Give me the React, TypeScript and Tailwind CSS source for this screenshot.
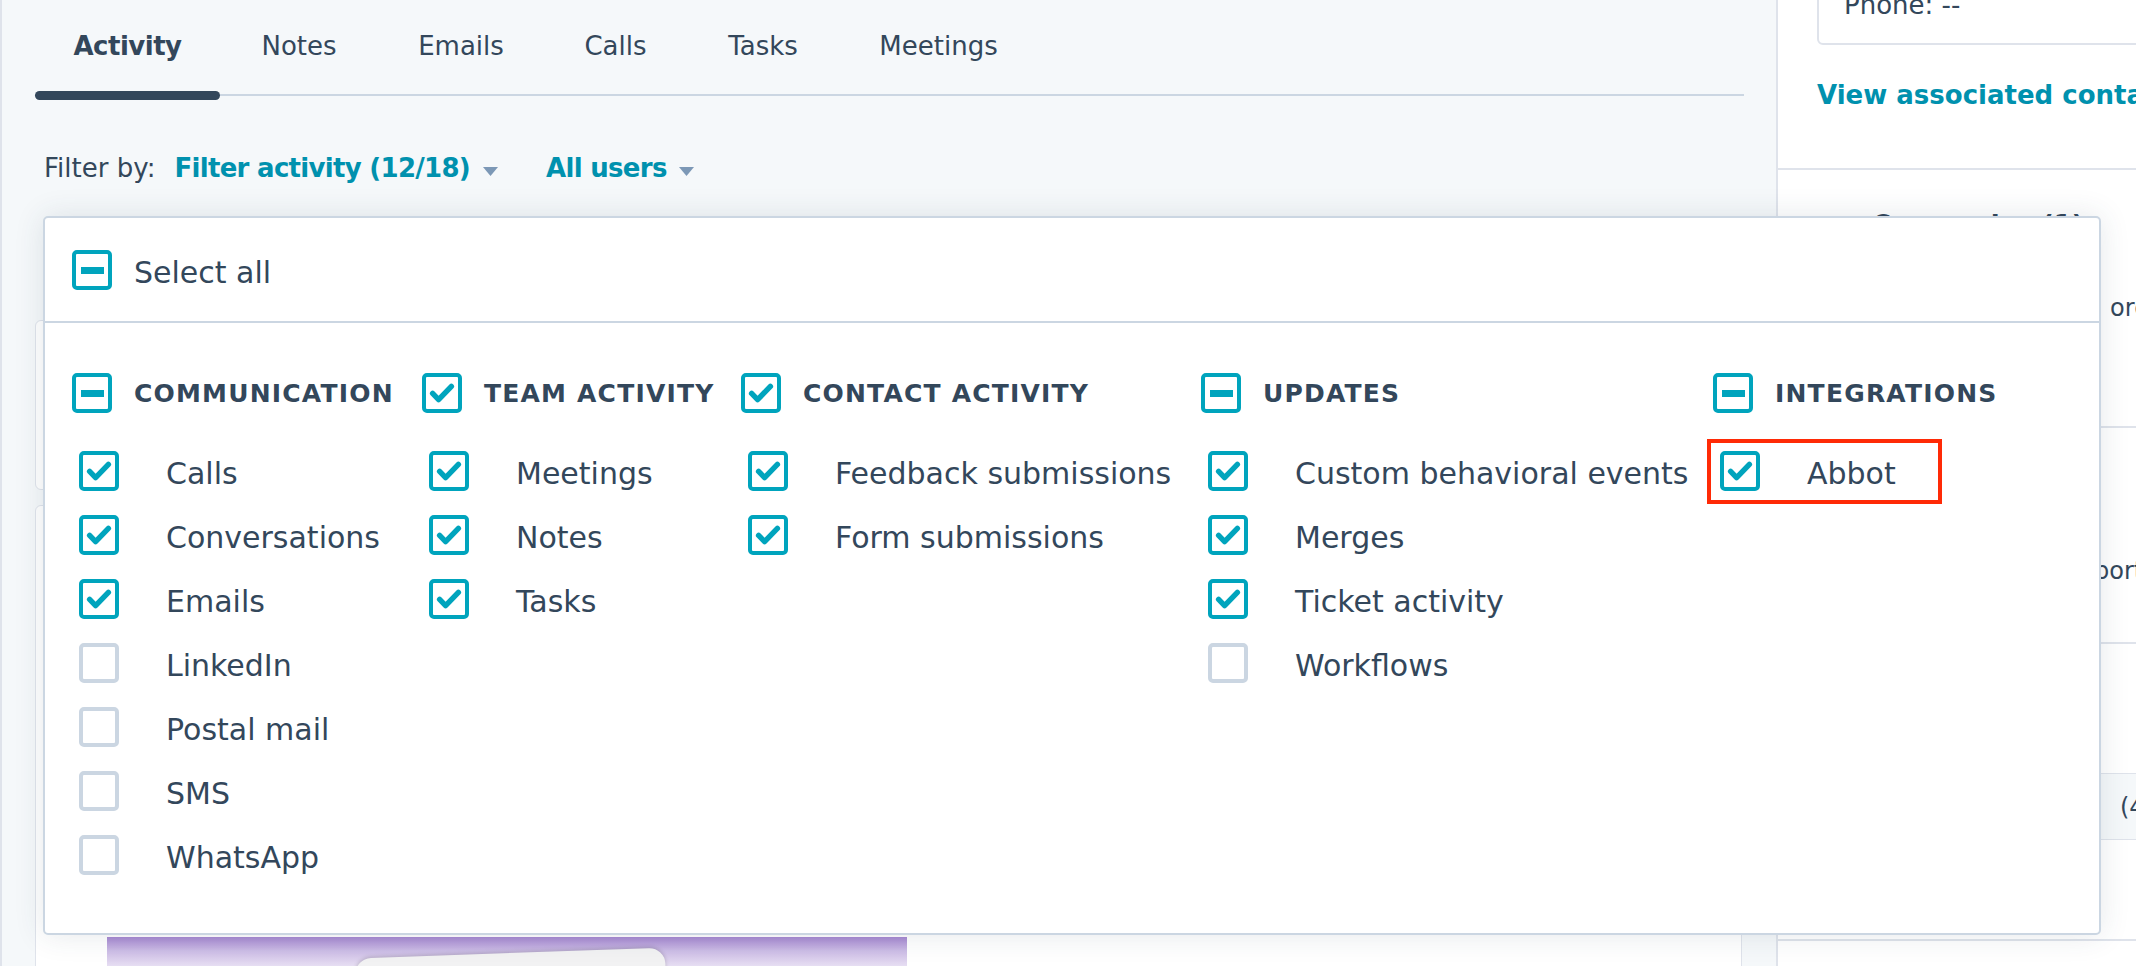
import React from "react";

type State = "on" | "off" | "mixed";

function Box({ state }: { state: State }) {
  if (state === "off") {
    return <span className="block h-[40px] w-[40px] shrink-0 rounded-[5px] border-4 border-[#cbd6e2] bg-white" />;
  }
  return (
    <span className="flex h-[40px] w-[40px] shrink-0 items-center justify-center rounded-[5px] border-4 border-[#00a4bd] bg-white">
      {state === "on" ? (
        <svg width="32" height="32" viewBox="0 0 32 32">
          <path
            d="M6.6 16.4 12.6 22.6 25.4 9.4"
            fill="none"
            stroke="#00a4bd"
            strokeWidth="5.4"
            strokeLinecap="round"
            strokeLinejoin="round"
          />
        </svg>
      ) : (
        <span className="block h-[7px] w-[23px] bg-[#00a4bd]" />
      )}
    </span>
  );
}

function Caret() {
  return (
    <svg width="15" height="9" viewBox="0 0 15 9" className="mt-[6px] shrink-0">
      <path d="M0 0h15L7.5 9z" fill="#7c98b6" />
    </svg>
  );
}

type Item = { label: string; state: State; mark?: boolean };
type Col = { title: string; state: State; items: Item[] };

const columns: Col[] = [
  {
    title: "COMMUNICATION",
    state: "mixed",
    items: [
      { label: "Calls", state: "on" },
      { label: "Conversations", state: "on" },
      { label: "Emails", state: "on" },
      { label: "LinkedIn", state: "off" },
      { label: "Postal mail", state: "off" },
      { label: "SMS", state: "off" },
      { label: "WhatsApp", state: "off" },
    ],
  },
  {
    title: "TEAM ACTIVITY",
    state: "on",
    items: [
      { label: "Meetings", state: "on" },
      { label: "Notes", state: "on" },
      { label: "Tasks", state: "on" },
    ],
  },
  {
    title: "CONTACT ACTIVITY",
    state: "on",
    items: [
      { label: "Feedback submissions", state: "on" },
      { label: "Form submissions", state: "on" },
    ],
  },
  {
    title: "UPDATES",
    state: "mixed",
    items: [
      { label: "Custom behavioral events", state: "on" },
      { label: "Merges", state: "on" },
      { label: "Ticket activity", state: "on" },
      { label: "Workflows", state: "off" },
    ],
  },
  {
    title: "INTEGRATIONS",
    state: "mixed",
    items: [{ label: "Abbot", state: "on", mark: true }],
  },
];

const tabs = [
  { label: "Activity", w: "w-[185px]", active: true },
  { label: "Notes", w: "w-[158px]" },
  { label: "Emails", w: "w-[166px]" },
  { label: "Calls", w: "w-[143px]" },
  { label: "Tasks", w: "w-[152px]" },
  { label: "Meetings", w: "w-[199px]" },
];

export default function App() {
  return (
    <div className="relative flex h-[966px] w-[2136px] overflow-hidden bg-[#f5f8fa] font-['DejaVu_Sans',sans-serif] text-[#33475b]">
      {/* Main column */}
      <div className="w-[1776px] shrink-0 border-l-2 border-[#dfe3eb]">
        <div className="ml-[33px] mr-[32px] flex border-b-2 border-[#cbd6e2]">
          {tabs.map((t) => (
            <div
              key={t.label}
              className={`relative ${t.w} pb-[30px] pt-[28px] text-center text-[26px] leading-[36px] ${
                t.active ? "font-semibold tracking-[-0.5px]" : "font-normal"
              }`}
            >
              {t.label}
              {t.active && (
                <span className="absolute bottom-[-6px] left-0 right-0 h-[9px] rounded-full bg-[#33475b]" />
              )}
            </div>
          ))}
        </div>

        <div className="ml-[42px] mt-[54px] flex h-[36px] items-center whitespace-nowrap text-[26px] leading-[36px]">
          <span>Filter by:</span>
          <span className="ml-[19px] font-bold tracking-[-0.7px] text-[#0091ae]">Filter activity (12/18)</span>
          <span className="ml-[13px] flex">
            <Caret />
          </span>
          <span className="ml-[48px] font-bold tracking-[-0.7px] text-[#0091ae]">All users</span>
          <span className="ml-[12px] flex">
            <Caret />
          </span>
        </div>

        <div className="ml-[33px] mt-[134px] h-[170px] w-[1707px] rounded-[6px] border border-[#dfe3eb] bg-white px-[30px] py-[28px]">
          <p className="text-[26px] font-bold">Upcoming</p>
        </div>

        <div className="ml-[33px] mt-[15px] h-[600px] w-[1707px] rounded-[6px] border border-[#dfe3eb] bg-white pl-[71px] pt-[431px]">
          <div className="relative h-[140px] w-[800px] overflow-hidden bg-[linear-gradient(180deg,#a789d1_0px,#cdbde6_14px,#e8e0f3_30px,#f4f0fa_60px)]">
            <div className="absolute left-[250px] top-[16px] h-[120px] w-[310px] -rotate-2 rounded-[16px] bg-[#f2f2f3] shadow-[0_-1px_4px_rgba(0,0,0,0.18)]" />
          </div>
        </div>
      </div>

      {/* Right sidebar */}
      <div className="w-[460px] shrink-0 border-l-2 border-[#dfe3eb] bg-white">
        <div className="border-b-2 border-[#dfe3eb] pb-[55px] pl-[39px] pr-[20px]">
          <div className="mt-[-60px] rounded-[6px] border-2 border-[#dfe3eb] px-[25px] pb-[20px] pt-[45px] text-[26px] leading-[36px]">
            Phone: --
          </div>
          <p className="mt-[32px] whitespace-nowrap text-[26px] font-bold leading-[36px] text-[#0091ae]">
            View associated contacts
          </p>
        </div>

        <div className="h-[258px] border-b-2 border-[#dfe3eb] pt-[37px]">
          <p className="pl-[94px] text-[26px] font-bold leading-[36px]">Companies (1)</p>
          <p className="mt-[47px] flex whitespace-nowrap text-[24px] leading-[36px]">
            <span className="w-[332px] shrink-0 pl-[39px]">Associate</span>
            <span>organizations</span>
          </p>
        </div>

        <div className="h-[216px] border-b-2 border-[#dfe3eb] pt-[125px]">
          <p className="flex whitespace-nowrap text-[24px] leading-[36px]">
            <span className="w-[316px] shrink-0 pl-[39px]">Deals</span>
            <span>portal</span>
          </p>
        </div>

        <div className="h-[297px] border-b-2 border-[#dfe3eb] pt-[129px]">
          <div className="flex h-[67px] items-center whitespace-nowrap border-y border-[#dfe3eb] bg-[#f5f8fa] text-[24px]">
            <span className="w-[342px] shrink-0 pl-[39px]">Tickets</span>
            <span>(4)</span>
          </div>
        </div>
      </div>

      {/* Filter popover */}
      <div className="absolute left-[43px] top-[216px] h-[719px] w-[2058px] rounded-[5px] border-2 border-[#cbd6e2] bg-white shadow-[0_0_30px_rgba(45,62,80,0.12)]">
        <div className="flex h-[105px] items-center gap-[22px] border-b-2 border-[#cbd6e2] pl-[27px] pt-[1px]">
          <Box state="mixed" />
          <span className="translate-y-[3px] text-[30px] leading-[40px]">Select all</span>
        </div>
        <div className="grid grid-cols-[350px_319px_460px_512px_1fr] pl-[27px] pt-[50px]">
          {columns.map((c) => (
            <div key={c.title}>
              <div className="flex h-[40px] items-center gap-[22px] whitespace-nowrap">
                <Box state={c.state} />
                <span className="translate-y-[1px] text-[25px] font-bold leading-[40px] tracking-[1.2px]">
                  {c.title}
                </span>
              </div>
              <div className="mt-[26px] pl-[7px]">
                {c.items.map((it) => (
                  <div key={it.label} className="relative flex h-[64px] items-center gap-[47px] whitespace-nowrap">
                    <Box state={it.state} />
                    <span className="translate-y-[3px] text-[30px] leading-[40px]">{it.label}</span>
                    {it.mark && (
                      <span className="pointer-events-none absolute left-[-13px] top-0 h-[65px] w-[235px] border-4 border-[#ff2a06]" />
                    )}
                  </div>
                ))}
              </div>
            </div>
          ))}
        </div>
      </div>
    </div>
  );
}
